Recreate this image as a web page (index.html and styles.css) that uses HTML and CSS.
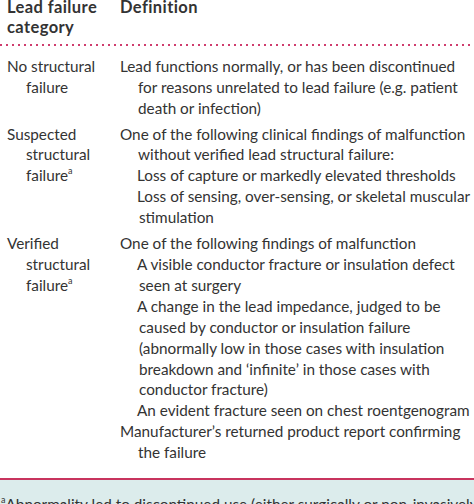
FILE: index.html
```html
<!DOCTYPE html>
<html>
<head>
<meta charset="utf-8">
<link rel="stylesheet" href="styles.css">
</head>
<body>
<div class="page">
  <div class="table">
    <div class="head">
      <div class="hcell">Lead failure<br>category</div>
      <div class="hcell">Definition</div>
    </div>
    <div class="dots"></div>
    <div class="body">
      <div class="row">
        <div class="cat">No structural failure</div>
        <div class="def">
          <p class="item">Lead functions normally, or has been discontinued<br>for reasons unrelated to lead failure (e.g. patient<br>death or infection)</p>
        </div>
      </div>
      <div class="row">
        <div class="cat">Suspected structural failure<sup>a</sup></div>
        <div class="def">
          <p class="item">One of the following clinical findings of malfunction<br>without verified lead structural failure:</p>
          <p class="sub">Loss of capture or markedly elevated thresholds</p>
          <p class="sub">Loss of sensing, over-sensing, or skeletal muscular<br>stimulation</p>
        </div>
      </div>
      <div class="row">
        <div class="cat">Verified structural failure<sup>a</sup></div>
        <div class="def">
          <p class="item">One of the following findings of malfunction</p>
          <p class="sub">A visible conductor fracture or insulation defect<br>seen at surgery</p>
          <p class="sub">A change in the lead impedance, judged to be<br>caused by conductor or insulation failure<br>(abnormally low in those cases with insulation<br>breakdown and ‘infinite’ in those cases with<br>conductor fracture)</p>
          <p class="sub">An evident fracture seen on chest roentgenogram</p>
          <p class="item">Manufacturer’s returned product report confirming<br>the failure</p>
        </div>
      </div>
    </div>
  </div>
  <div class="foot">
    <p class="note"><sup>a</sup>Abnormality led to discontinued use (either surgically or non-invasively)</p>
  </div>
</div>
</body>
</html>
```

FILE: styles.css
```css
html, body {
  margin: 0;
  padding: 0;
  background: #fff;
}
.page {
  width: 474px;
  height: 504px;
  overflow: hidden;
  font-family: Lato, "Noto Sans", sans-serif;
  font-size: 15.3px;
  line-height: 20.9px;
  color: #333;
}
.table {
  padding-bottom: 15px;
  border-bottom: 2px solid #c8345e;
}
.head, .row {
  display: grid;
  grid-template-columns: 113px minmax(0, 1fr);
  padding-left: 7px;
}
.head {
  margin-top: -3px;
  padding-bottom: 6px;
  font-weight: bold;
  font-size: 16.5px;
  letter-spacing: 0.4px;
  line-height: 20.4px;
}
.dots {
  height: 2px;
  background-image: linear-gradient(to right, #cf3d6e 2px, transparent 2px);
  background-size: 6px 2px;
  margin-bottom: 10px;
}
.body {
  display: flex;
  flex-direction: column;
  gap: 5px;
}
.cat {
  padding-left: 19px;
  text-indent: -19px;
}
.def {
  white-space: nowrap;
}
.def p {
  margin: 0;
}
.item {
  padding-left: 18px;
  text-indent: -18px;
}
.sub {
  padding-left: 19px;
  text-indent: -2px;
}
sup {
  font-size: 9px;
  line-height: 0;
  vertical-align: 7px;
}
.foot {
  background: #dcecec;
  padding-top: 14px;
  height: 40px;
}
.note {
  margin: 0;
  padding-left: 1px;
  white-space: nowrap;
}
```
